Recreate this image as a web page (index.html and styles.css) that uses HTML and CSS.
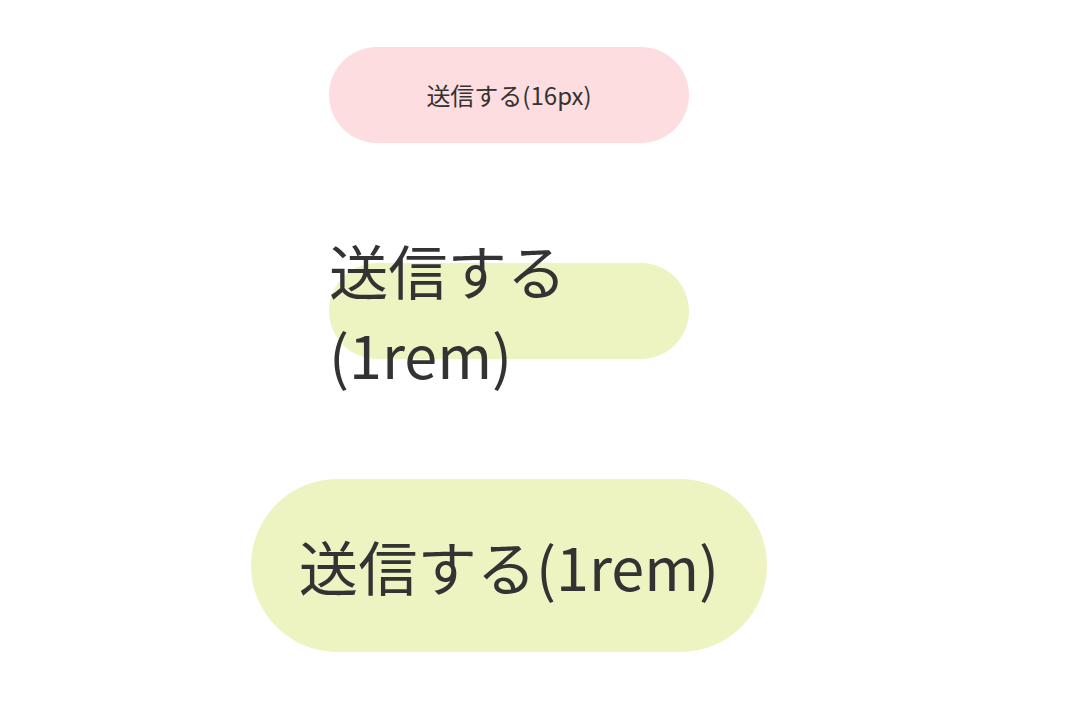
FILE: index.html
```html
<!DOCTYPE html>
<html lang="ja">
<head>
<meta charset="utf-8">
<title>送信する</title>
<link rel="stylesheet" href="styles.css">
</head>
<body>
<main class="stage">
  <a class="btn btn-px" href="#">送信する(16px)</a>
  <a class="btn btn-rem" href="#">送信する(1rem)</a>
  <a class="btn btn-pad" href="#">送信する(1rem)</a>
</main>
</body>
</html>
```

FILE: styles.css
```css
html, body {
  margin: 0;
  padding: 0;
  background: #ffffff;
}
body {
  font-family: "Noto Sans CJK JP", "Noto Sans", sans-serif;
  color: #333333;
}
.stage {
  width: 1018px;
  padding-top: 47px;
  display: flex;
  flex-direction: column;
  align-items: center;
  gap: 120px;
}
.btn {
  display: flex;
  align-items: center;
  justify-content: center;
  text-decoration: none;
  color: #333333;
  border-radius: 999px;
  box-sizing: border-box;
}
.btn-px {
  width: 360px;
  height: 96px;
  background: #fddde0;
  font-size: 24px;
  line-height: 1.5;
}
.btn-rem {
  width: 360px;
  height: 96px;
  background: #edf3c1;
  font-size: 59.3px;
  line-height: 84px;
}
.btn-pad {
  padding: 42px 48px;
  background: #edf3c1;
  font-size: 59.3px;
  line-height: 1.5;
  white-space: nowrap;
}
```
